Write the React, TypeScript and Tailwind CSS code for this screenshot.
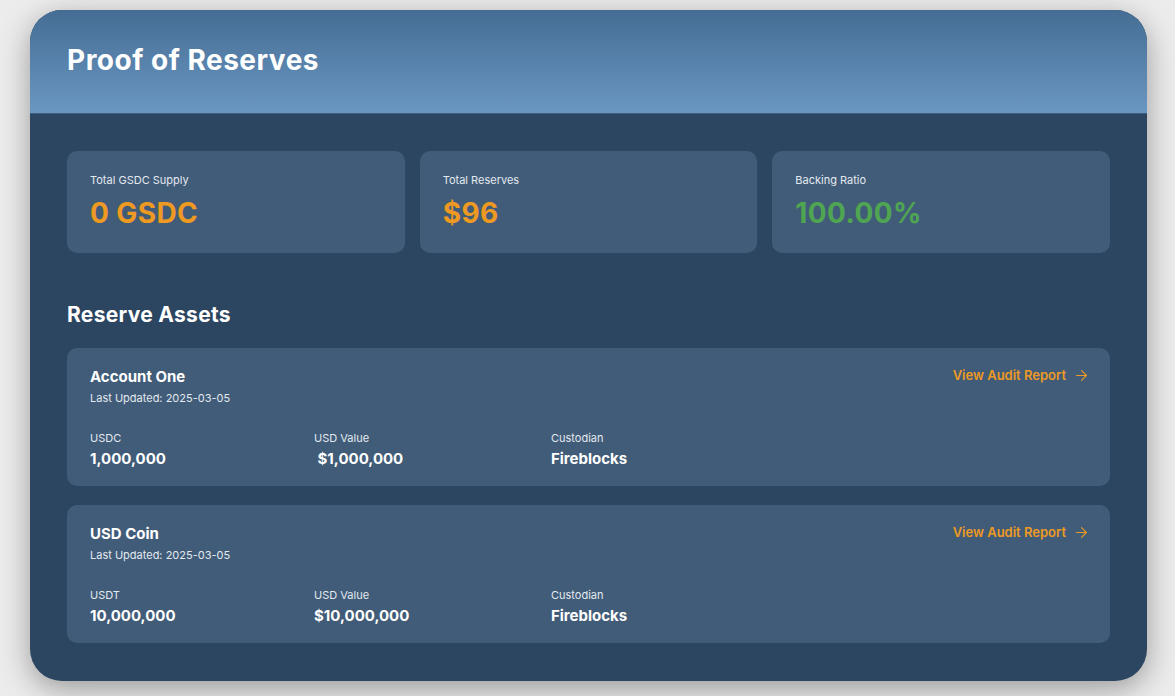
import { ArrowRight } from 'lucide-react';

interface Asset {
  name: string;
  updated: string;
  token: string;
  amount: string;
  usd: string;
  custodian: string;
}

const ASSETS: Asset[] = [
  { name: 'Account One', updated: '2025-03-05', token: 'USDC', amount: '1,000,000', usd: '\u00a0$1,000,000', custodian: 'Fireblocks' },
  { name: 'USD Coin', updated: '2025-03-05', token: 'USDT', amount: '10,000,000', usd: '$10,000,000', custodian: 'Fireblocks' },
];

function StatCard({ label, value, color }: { label: string; value: string; color: string }) {
  return (
    <div className="h-[102px] rounded-[10px] bg-[#415c78] px-[23px] pt-[22px]">
      <div className="text-[11px] leading-[14px] text-[#e3e9f0]">{label}</div>
      <div className={`mt-[8px] text-[28px] font-bold leading-[36px] tracking-[0.4px] ${color}`}>{value}</div>
    </div>
  );
}

function AssetCard({ a }: { a: Asset }) {
  return (
    <div className="h-[138px] rounded-[10px] bg-[#415c78] pl-[23px] pr-[20px] pt-[19px]">
      <div className="flex items-start justify-between">
        <div>
          <div className="text-[15px] font-bold leading-[20px] text-white">{a.name}</div>
          <div className="mt-[3px] text-[11px] leading-[16px] text-[#e3e9f0]">Last Updated: {a.updated}</div>
        </div>
        <a className="-mt-[1px] flex items-center gap-[7px] text-[13px] font-semibold text-[#ee9a22]">
          View Audit Report
          <ArrowRight size={17} strokeWidth={1.5} />
        </a>
      </div>
      <div className="mt-[25px] flex">
        <div className="w-[224px]">
          <div className="text-[11px] leading-[14px] text-[#e3e9f0]">{a.token}</div>
          <div className="mt-[4px] text-[15px] font-bold leading-[20px] text-white">{a.amount}</div>
        </div>
        <div className="w-[237px]">
          <div className="text-[11px] leading-[14px] text-[#e3e9f0]">USD Value</div>
          <div className="mt-[4px] text-[15px] font-bold leading-[20px] text-white">{a.usd}</div>
        </div>
        <div>
          <div className="text-[11px] leading-[14px] text-[#e3e9f0]">Custodian</div>
          <div className="mt-[4px] text-[15px] font-bold leading-[20px] text-white">{a.custodian}</div>
        </div>
      </div>
    </div>
  );
}

export default function App() {
  return (
    <div
      className="h-[696px] w-[1175px] overflow-hidden bg-[#ececec] pl-[30px] pt-[10px]"
      style={{ fontFamily: 'Inter, "Noto Sans", sans-serif' }}
    >
      <div className="w-[1117px] overflow-hidden rounded-[32px] bg-[#2c4560] shadow-[0_8px_30px_rgba(0,0,0,0.35)]">
        <div className="h-[104px] border-b border-[#3d5f82] bg-gradient-to-b from-[#456d94] to-[#6a97c2] px-[37px] pt-[32px]">
          <h1 className="text-[28px] font-bold leading-[36px] tracking-[0.5px] text-white">Proof of Reserves</h1>
        </div>
        <div className="px-[37px] pb-[38px] pt-[37px]">
          <div className="grid grid-cols-3 gap-[15px]">
            <StatCard label="Total GSDC Supply" value="0 GSDC" color="text-[#ee9a22]" />
            <StatCard label="Total Reserves" value="$96" color="text-[#ee9a22]" />
            <StatCard label="Backing Ratio" value="100.00%" color="text-[#4fa552]" />
          </div>
          <h2 className="mt-[49px] text-[21px] font-bold leading-[26px] tracking-[0.3px] text-white">Reserve Assets</h2>
          <div className="mt-[20px] flex flex-col gap-[19px]">
            {ASSETS.map((a) => (
              <AssetCard key={a.name} a={a} />
            ))}
          </div>
        </div>
      </div>
    </div>
  );
}
